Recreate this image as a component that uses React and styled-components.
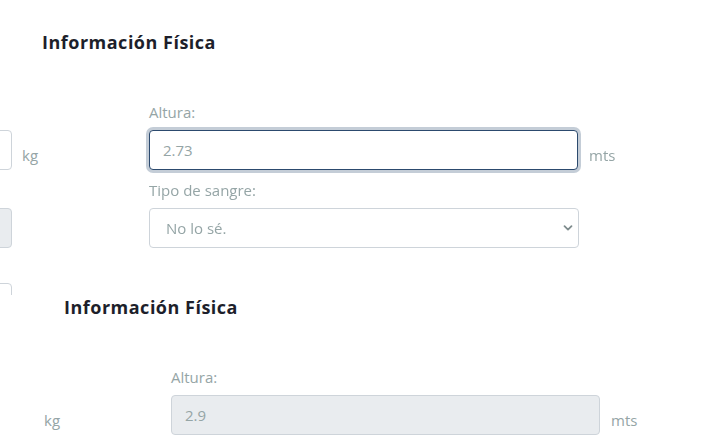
import React from "react";
import styled, { createGlobalStyle, css } from "styled-components";

const Global = createGlobalStyle`
  body {
    margin: 0;
    background: #ffffff;
    font-family: "Open Sans", "Liberation Sans", sans-serif;
    overflow: hidden;
  }
`;

const Section = styled.section`
  padding-left: ${(p) => p.$inset}px;
  padding-top: ${(p) => p.$top}px;
  height: ${(p) => (p.$clip ? `${p.$clip}px` : "auto")};
  overflow: hidden;
  box-sizing: border-box;
`;

const Title = styled.h4`
  margin: 0 0 48px;
  font-size: 18px;
  line-height: 24px;
  font-weight: 700;
  color: #1d1f2b;
  letter-spacing: 0.5px;
`;

const Row = styled.div`
  display: flex;
  margin-left: -200px;
`;

const Column = styled.div`
  width: ${(p) => p.$width}px;
  flex: none;
  display: flex;
  flex-direction: column;
  gap: 10px;
`;

const Field = styled.div`
  display: flex;
  flex-direction: column;
`;

const Label = styled.label`
  font-size: 15px;
  line-height: 20px;
  color: #95a5a6;
  margin-bottom: 8px;
  white-space: nowrap;
`;

// left column labels sit outside the viewport, keep only their height
const Spacer = styled.div`
  height: ${(p) => p.$h}px;
`;

const Line = styled.div`
  display: flex;
  align-items: flex-end;
  gap: ${(p) => p.$gap}px;
`;

const controlBase = css`
  box-sizing: border-box;
  width: ${(p) => p.$width}px;
  height: 40px;
  border: 1px solid #ced4da;
  border-radius: 4px;
  font-family: inherit;
  font-size: 15px;
  color: #95a5a6;
  background: #fff;
  outline: none;
`;

const Input = styled.input`
  ${controlBase};
  padding: 0 13px;
  visibility: ${(p) => (p.$hidden ? "hidden" : "visible")};
  ${(p) =>
    p.$focus &&
    css`
      border-color: #2c4a6e;
      box-shadow: 0 0 0 3px rgba(44, 74, 110, 0.28);
      caret-color: #2c3e50;
    `}
  &:disabled {
    background: #e9ecef;
  }
`;

const SelectWrap = styled.div`
  position: relative;
  width: ${(p) => p.$width}px;
`;

const Select = styled.select`
  ${controlBase};
  width: 100%;
  appearance: none;
  padding: 0 16px;
`;

const Chevron = styled.svg`
  position: absolute;
  right: 6px;
  top: 15px;
  pointer-events: none;
`;

const Unit = styled.span`
  font-size: 15px;
  line-height: 20px;
  color: #95a5a6;
  padding-bottom: 5px;
  width: ${(p) => p.$width}px;
  flex: none;
`;

function Block({ inset, top, clip, focus, altura, second }) {
  return (
    <Section $inset={inset} $top={top} $clip={clip}>
      <Title>Información Física</Title>
      <Row>
        <Column $width={307}>
          <Field>
            <Spacer $h={28} />
            <Line $gap={10}>
              <Input $width={170} $hidden={second} aria-label="Peso" readOnly />
              <Unit $width={20}>kg</Unit>
            </Line>
          </Field>
          {!second && (
            <>
              <Field>
                <Spacer $h={28} />
                <Input $width={170} aria-label="IMC" disabled />
              </Field>
              <Field>
                <Spacer $h={25} />
                <Input $width={170} aria-label="Edad" readOnly />
              </Field>
            </>
          )}
        </Column>
        <Column $width={480}>
          <Field>
            <Label>Altura:</Label>
            <Line $gap={11}>
              <Input
                $width={430}
                $focus={focus}
                disabled={second}
                defaultValue={altura}
                autoFocus={focus}
              />
              <Unit $width={40}>mts</Unit>
            </Line>
          </Field>
          {!second && (
            <Field>
              <Label>Tipo de sangre:</Label>
              <SelectWrap $width={430}>
                <Select defaultValue="nd">
                  <option value="nd">No lo sé.</option>
                  <option value="a+">A+</option>
                  <option value="o+">O+</option>
                </Select>
                <Chevron width="10" height="10" viewBox="0 0 10 10">
                  <path
                    d="M1.5 3.2 L5 6.6 L8.5 3.2"
                    fill="none"
                    stroke="#7f8c8d"
                    strokeWidth="1.8"
                    strokeLinecap="round"
                    strokeLinejoin="round"
                  />
                </Chevron>
              </SelectWrap>
            </Field>
          )}
        </Column>
      </Row>
    </Section>
  );
}

export default function App() {
  return (
    <>
      <Global />
      <Block inset={42} top={30} clip={295} focus altura="2.73" />
      <Block inset={64} top={0} altura="2.9" second />
    </>
  );
}
